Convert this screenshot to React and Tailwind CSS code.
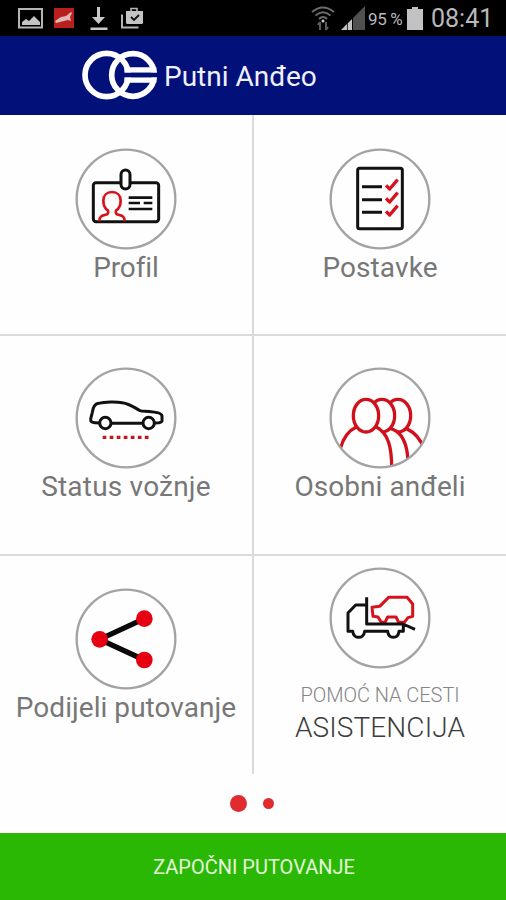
import clsx from 'clsx'

function StatusBar() {
  return (
    <div className="h-9 shrink-0 bg-black flex items-center justify-between text-[#b9b9b9]">
      <div className="flex items-center pl-[18px] pt-px">
        {/* screenshot */}
        <svg width="25" height="21" viewBox="0 0 25 21">
          <rect x="1" y="1" width="23" height="18.500" fill="none" stroke="#b5b5b5" strokeWidth="2" />
          <path d="M4 17v-3l4-3 3 2 5-5 6 6v3z" fill="#c4c4c4" />
        </svg>
        {/* puma app */}
        <svg width="20" height="20" viewBox="0 0 20 20" className="ml-[11px] -mt-0.5">
          <rect width="20" height="20" fill="#b81f1d" />
          <path d="M1 13l6-4 5-1 5-4 1 1-2 4 1 4-3-1-4 1-4 1-4 1z" fill="#dcb9b3" />
        </svg>
        {/* download */}
        <svg width="18" height="24" viewBox="0 0 18 24" className="ml-4">
          <path d="M7 0h3v10h5l-6.500 7-6.500-7h5z" fill="#c8c8c8" />
          <path d="M.5 20.500h17v2.500h-17z" fill="#c8c8c8" />
        </svg>
        {/* play store update */}
        <svg width="23" height="22" viewBox="0 0 23 22" className="ml-[13px] -mt-0.5">
          <path d="M1 7.500V20.500H17.500" fill="none" stroke="#b5b5b5" strokeWidth="2" />
          <path d="M10 4V1.500h6V4" fill="none" stroke="#b5b5b5" strokeWidth="1.600" />
          <path d="M5 4h17v11.500q0 1.500-1.500 1.500h-14q-1.500 0-1.500-1.500z" fill="#c4c4c4" />
          <path d="M10 10l3 3 5-5" fill="none" stroke="#111" strokeWidth="1.800" />
        </svg>
      </div>

      <div className="flex items-center pr-[13px]">
        <svg width="24" height="25" viewBox="0 0 24 25" fill="none" stroke="#6c6c6c" strokeWidth="2" className="mr-[6px]">
          <path d="M1 6Q12-3 23 6" />
          <path d="M4.500 9.500Q12 3 19.500 9.500" />
          <path d="M8 13Q12 9 16 13" />
          <path d="M9 16v8M15 16v8M9 16l-2 3M15 24l2-3" stroke="#5c5c5c" />
          <circle cx="12" cy="15" r="1.500" fill="#ccc" stroke="none" />
        </svg>
        <svg width="24" height="24" viewBox="0 0 24 24">
          <path d="M24 0v24H12V12z" fill="#505050" />
          <path d="M0 24L11 13v11z" fill="#c4c4c4" />
          <path d="M6.500 17v7" stroke="#333" />
        </svg>
        <span className="ml-[3px] pt-0.5 w-[36px] text-[17px] leading-none whitespace-nowrap tracking-[-0.400px]">95 %</span>
        <svg width="16" height="23" viewBox="0 0 16 23" className="ml-[3px]">
          <path d="M5 0h6v2h5v21H0V2h5z" fill="#c2c2c2" />
        </svg>
        <span className="ml-[8px] w-[62px] text-[25px] leading-none whitespace-nowrap">08:41</span>
      </div>
    </div>
  )
}

function Logo() {
  return (
    <svg width="76" height="50" viewBox="0 0 228 150">
      <g fill="none" stroke="#fff">
        <circle cx="77" cy="75" r="65" strokeWidth="17" />
        <circle cx="156" cy="75" r="64" strokeWidth="17" />
        <path d="M130 60H226M130 90H226" strokeWidth="16" />
      </g>
      <path d="M131 68H228V82H131z" fill="#02107a" />
    </svg>
  )
}

function Badge({ children }) {
  return (
    <svg width="102" height="102" viewBox="0 0 306 306" fill="none" strokeLinejoin="round" className="shrink-0">
      {children}
      <circle cx="153" cy="153" r="148" stroke="#a3a3a3" strokeWidth="7" />
    </svg>
  )
}

function ProfileIcon() {
  return (
    <Badge>
      <rect x="55" y="104" width="196" height="117" rx="8" stroke="#111" strokeWidth="9" />
      <rect x="138" y="66" width="27" height="57" rx="13.500" fill="#fff" stroke="#111" strokeWidth="9" />
      <path
        d="M73 220C73 204 80 203 96 199Q101 196 99 188C88 180 85 169 85 158C85 142 96 132 111 132S137 142 137 158C137 169 134 180 123 188Q121 196 126 199C142 203 149 204 149 220"
        stroke="#d8121c"
        strokeWidth="8"
      />
      <path d="M161 149H232M161 165H195M206 165H232M161 183H232" stroke="#111" strokeWidth="8" />
    </Badge>
  )
}

function SettingsIcon() {
  return (
    <Badge>
      <rect x="86" y="61" width="134" height="181" rx="6" stroke="#111" strokeWidth="9" />
      <path d="M99 116H159M99 155H159M99 193H159" stroke="#111" strokeWidth="9" />
      <path d="M171 112L182 123L206 95M171 151L182 162L206 134M171 190L182 201L206 173" stroke="#d8121c" strokeWidth="10" />
    </Badge>
  )
}

function CarIcon() {
  return (
    <Badge>
      <path
        d="M74 168L60 167Q46 166 47 158C48 148 51 142 52 136C54 122 60 111 70 109C90 104 125 104 142 107C165 110 178 122 195 131Q200 133 210 133C235 134 260 137 261 147V162Q260 166 252 167L239 168M108 169H204"
        stroke="#111"
        strokeWidth="9"
      />
      <circle cx="91" cy="168" r="17" stroke="#111" strokeWidth="9" />
      <circle cx="221" cy="168" r="17" stroke="#111" strokeWidth="9" />
      <path d="M83 211H225" stroke="#c9131f" strokeWidth="10" strokeDasharray="11 10.100" />
    </Badge>
  )
}

function AngelsIcon() {
  return (
    <Badge>
      <clipPath id="angels">
        <circle cx="153" cy="153" r="147" />
      </clipPath>
      <g clipPath="url(#angels)" fill="#fff" stroke="#d0111c" strokeWidth="10">
        <path d="M180 190C215 170 260 184 286 245L240 290H180z" />
        <ellipse cx="207" cy="146" rx="38" ry="49" />
        <path d="M130 190C200 165 236 205 237 290V320H130z" />
        <ellipse cx="159" cy="146" rx="38" ry="49" />
        <path d="M34 245C42 215 58 191 82 180H142C176 198 190 235 188 320H34z" />
        <ellipse cx="111" cy="146" rx="38" ry="49" />
      </g>
    </Badge>
  )
}

function ShareIcon() {
  return (
    <Badge>
      <path d="M208 92L74 154L208 216" stroke="#0a0a0a" strokeWidth="16" />
      <g fill="#e60012">
        <circle cx="74" cy="154" r="25" />
        <circle cx="208" cy="92" r="25" />
        <circle cx="208" cy="216" r="25" />
      </g>
    </Badge>
  )
}

function TowIcon() {
  return (
    <Badge>
      <path
        d="M129 121L152 118L179 91H234L251 111V148L237 152L226 166H209L201 150H176L168 166H157L147 150L132 148z"
        stroke="#d8121c"
        strokeWidth="9"
      />
      <path
        d="M113 91V171H222L258 187M113 114H80L57 138V193H71C74 217 104 217 107 193H176C179 217 207 217 210 193H223V171"
        stroke="#111"
        strokeWidth="9"
      />
    </Badge>
  )
}

const tiles = [
  { label: 'Profil', icon: ProfileIcon, style: 'tracking-[-0.100px]' },
  { label: 'Postavke', icon: SettingsIcon, style: 'tracking-[0.100px]' },
  { label: 'Status vožnje', icon: CarIcon, style: 'tracking-[0.200px]' },
  { label: 'Osobni anđeli', icon: AngelsIcon, style: 'tracking-[0.050px]' },
  { label: 'Podijeli putovanje', icon: ShareIcon, style: 'tracking-[0.050px]' },
  { label: 'ASISTENCIJA', hint: 'POMOĆ NA CESTI', icon: TowIcon, style: 'tracking-[0.100px]' },
]

function Tile({ label, hint, icon: Icon, style, first, left, last }) {
  return (
    <button
      className={clsx(
        'flex flex-col items-center border-[#dadada]',
        left && 'border-r-2',
        !last && 'border-b-2',
        hint ? 'pt-[11px]' : first ? 'pt-[33px]' : last ? 'pt-[32px]' : 'pt-[31px]'
      )}
    >
      <Icon />
      {hint && (
        <span className="mt-[13px] h-[26px] text-[20px] leading-[26px] font-light text-[#858585] whitespace-nowrap tracking-[-0.050px]">
          {hint}
        </span>
      )}
      <span
        className={clsx(
          'text-[28px] leading-[34px] whitespace-nowrap',
          hint ? 'mt-[3px] font-light text-[#3c3c3c]' : 'mt-px font-normal text-[#777]',
          style
        )}
      >
        {label}
      </span>
    </button>
  )
}

export default function App() {
  return (
    <div className="w-full h-[900px] flex flex-col bg-[#fefefe] font-[Roboto,sans-serif] overflow-hidden">
      <StatusBar />

      <header className="h-[79px] shrink-0 bg-[#02107a] flex items-center pl-[81px] pb-[2px]">
        <Logo />
        <h1 className="ml-[7px] pt-[4px] text-[28px] leading-none text-[#eef0fa] whitespace-nowrap">Putni Anđeo</h1>
      </header>

      <main className="h-[659px] shrink-0 grid grid-cols-[254px_252px] grid-rows-[221px_220px_218px]">
        {tiles.map((tile, i) => (
          <Tile key={tile.label} {...tile} first={i < 2} left={i % 2 === 0} last={i > 3} />
        ))}
      </main>

      {/* pager */}
      <div className="h-[59px] shrink-0 flex items-center justify-center gap-4 pr-0.5">
        <span className="size-[17px] rounded-full bg-[#e02b2f]" />
        <span className="size-[11px] rounded-full bg-[#e02b2f]" />
      </div>

      <button className="h-[67px] shrink-0 bg-[#2ab804] pl-0.5 text-[20px] text-[#e4f8dc] whitespace-nowrap">
        ZAPOČNI PUTOVANJE
      </button>
    </div>
  )
}
